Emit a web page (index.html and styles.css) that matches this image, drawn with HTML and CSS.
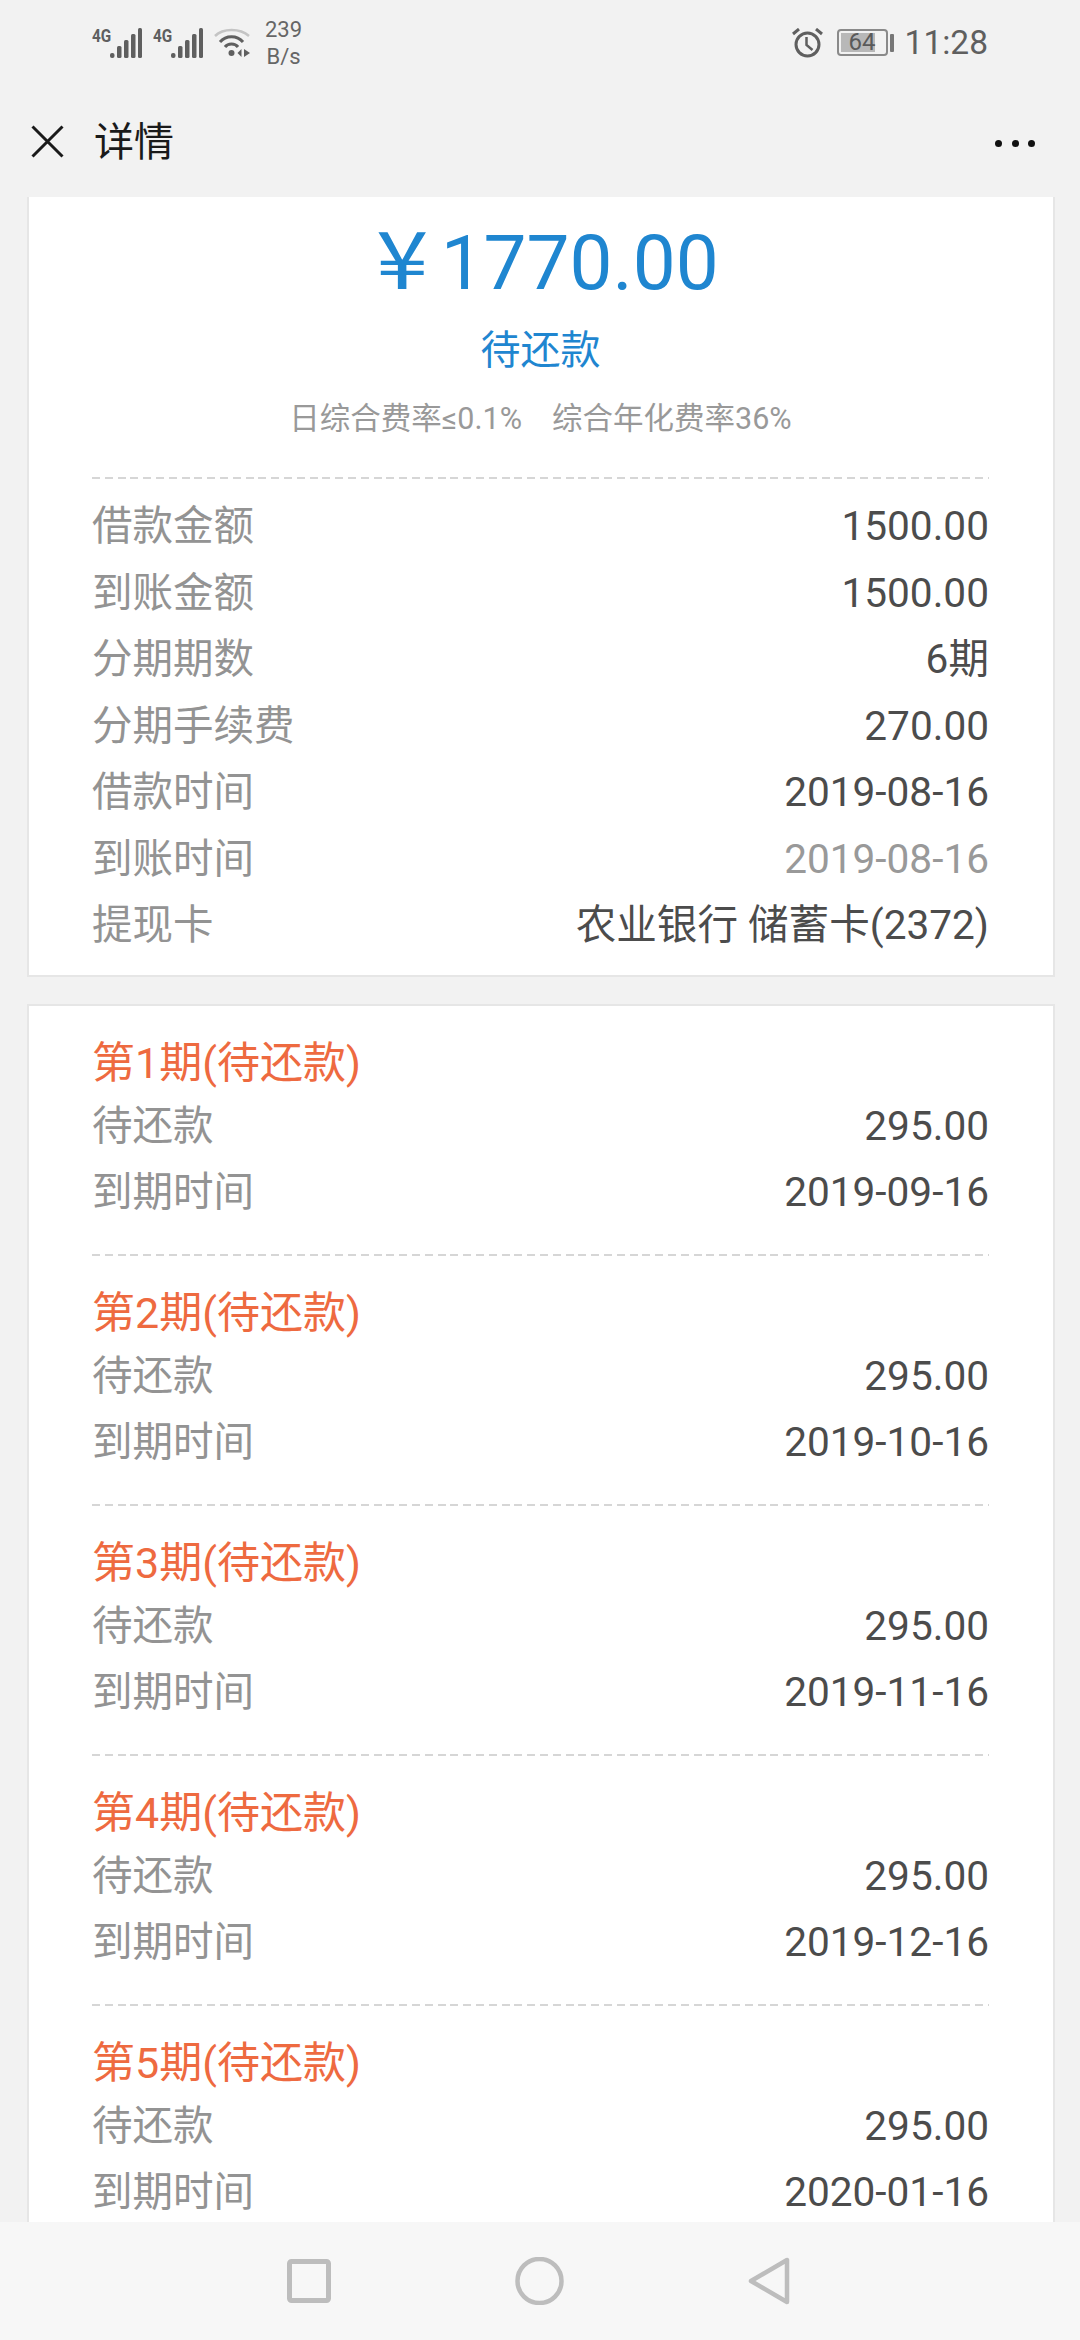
FILE: index.html
```html
<!DOCTYPE html>
<html lang="zh">
<head>
<meta charset="utf-8">
<title>详情</title>
<link rel="stylesheet" href="styles.css">
</head>
<body>
<div class="screen">
  <div class="status">
    <div class="status-left">
      <span class="net"><span class="g">4G</span><svg width="32" height="30" viewBox="0 0 32 30"><g fill="#5f5f5f"><rect x="0" y="25" width="4.500" height="5" rx="2"/><rect x="7" y="18" width="4.500" height="12" rx="1.500"/><rect x="14" y="12" width="4.500" height="18" rx="1.500"/><rect x="21" y="6" width="4.500" height="24" rx="1.500"/><rect x="28" y="0" width="4" height="30" rx="1.500"/></g></svg></span>
      <span class="net"><span class="g">4G</span><svg width="32" height="30" viewBox="0 0 32 30"><g fill="#5f5f5f"><rect x="0" y="25" width="4.500" height="5" rx="2"/><rect x="7" y="18" width="4.500" height="12" rx="1.500"/><rect x="14" y="12" width="4.500" height="18" rx="1.500"/><rect x="21" y="6" width="4.500" height="24" rx="1.500"/><rect x="28" y="0" width="4" height="30" rx="1.500"/></g></svg></span>
      <svg class="wifi" width="37" height="30" viewBox="0 0 37 30"><path d="M1 8C9 0 26 0 35 8" fill="none" stroke="#c4c4c4" stroke-width="2.500"/><path d="M6 14C12 7 23 7 29 14" fill="none" stroke="#5f5f5f" stroke-width="3"/><path d="M11 19C14 15 21 15 24 19" fill="none" stroke="#5f5f5f" stroke-width="3"/><circle cx="17.500" cy="25" r="3" fill="#5f5f5f"/><path d="M23.500 25l4-4v8zM30 21l6 4-6 4z" fill="#5f5f5f"/></svg>
      <span class="speed">239<br>B/s</span>
    </div>
    <div class="status-right">
      <svg class="alarm" width="31" height="30" viewBox="0 0 31 30"><circle cx="15.500" cy="16.500" r="11.500" fill="none" stroke="#5f5f5f" stroke-width="3"/><path d="M14.500 9v8l6 5" fill="none" stroke="#5f5f5f" stroke-width="2.500"/><path d="M1 6l6-5M30 6l-6-5" fill="none" stroke="#5f5f5f" stroke-width="3"/></svg>
      <span class="battery"><span class="battery-body"><span class="battery-fill"></span><span class="battery-num">64</span></span><span class="battery-cap"></span></span>
      <span class="clock">11:28</span>
    </div>
  </div>

  <div class="topbar">
    <svg class="close" width="33" height="33" viewBox="0 0 33 33"><path d="M1.500 1.500L31.500 31.500M31.500 1.500L1.500 31.500" stroke="#1a1a1a" stroke-width="3" fill="none"/></svg>
    <span class="title">详情</span>
    <span class="dots"><i></i><i></i><i></i></span>
  </div>

  <main class="content">
    <section class="card">
      <div class="amount"><span class="yen">¥</span><span>1770.00</span></div>
      <div class="state">待还款</div>
      <div class="rates"><span>日综合费率≤0.1%</span><span>综合年化费率36%</span></div>
      <div class="rows">
        <div class="row"><span>借款金额</span><b>1500.00</b></div>
        <div class="row"><span>到账金额</span><b>1500.00</b></div>
        <div class="row"><span>分期期数</span><b>6期</b></div>
        <div class="row"><span>分期手续费</span><b>270.00</b></div>
        <div class="row"><span>借款时间</span><b>2019-08-16</b></div>
        <div class="row"><span>到账时间</span><b class="muted">2019-08-16</b></div>
        <div class="row"><span>提现卡</span><b>农业银行 储蓄卡(2372)</b></div>
      </div>
    </section>

    <section class="card plans">
      <div class="plan">
        <div class="plan-title">第1期(待还款)</div>
        <div class="row"><span>待还款</span><b>295.00</b></div>
        <div class="row"><span>到期时间</span><b>2019-09-16</b></div>
      </div>
      <div class="plan">
        <div class="plan-title">第2期(待还款)</div>
        <div class="row"><span>待还款</span><b>295.00</b></div>
        <div class="row"><span>到期时间</span><b>2019-10-16</b></div>
      </div>
      <div class="plan">
        <div class="plan-title">第3期(待还款)</div>
        <div class="row"><span>待还款</span><b>295.00</b></div>
        <div class="row"><span>到期时间</span><b>2019-11-16</b></div>
      </div>
      <div class="plan">
        <div class="plan-title">第4期(待还款)</div>
        <div class="row"><span>待还款</span><b>295.00</b></div>
        <div class="row"><span>到期时间</span><b>2019-12-16</b></div>
      </div>
      <div class="plan">
        <div class="plan-title">第5期(待还款)</div>
        <div class="row"><span>待还款</span><b>295.00</b></div>
        <div class="row"><span>到期时间</span><b>2020-01-16</b></div>
      </div>
    </section>
  </main>

  <nav class="navbar">
    <svg width="44" height="44" viewBox="0 0 44 44"><rect x="2.500" y="2.500" width="39" height="39" rx="2" fill="none" stroke="#bdbdbd" stroke-width="5"/></svg>
    <svg width="49" height="48" viewBox="0 0 49 48"><circle cx="24.500" cy="24" r="22" fill="none" stroke="#bdbdbd" stroke-width="4.500"/></svg>
    <svg width="42" height="48" viewBox="0 0 42 48"><path d="M39 3V45L3 24Z" fill="none" stroke="#bdbdbd" stroke-width="4.500" stroke-linejoin="round"/></svg>
  </nav>
</div>
</body>
</html>
```
FILE: styles.css
```css
* { box-sizing: border-box; }
html, body { margin: 0; padding: 0; }
body { font-family: Roboto, "Noto Sans CJK SC", sans-serif; background: #f2f2f2; }
.screen { width: 1080px; height: 2340px; display: flex; flex-direction: column; overflow: hidden; background: #f2f2f2; }

.status { height: 85px; flex: none; display: flex; justify-content: space-between; align-items: center; padding: 0 92px; color: #5f5f5f; }
.status-left, .status-right { display: flex; align-items: center; }
.net { display: flex; align-items: flex-start; margin-right: 11px; width: 50px; height: 30px; }
.net .g { display: block; width: 18px; flex: none; font-size: 18px; font-weight: 700; line-height: 16px; white-space: nowrap; transform: scaleX(.85); transform-origin: left top; }
.wifi { margin-right: 14px; }
.speed { font-size: 22px; line-height: 27px; text-align: center; color: #666; }
.alarm { margin-right: 14px; }
.battery { display: flex; align-items: center; margin-right: 11px; }
.battery-body { position: relative; width: 51px; height: 27px; border: 2px solid #8a8a8a; border-radius: 4px; padding: 2px; display: block; }
.battery-fill { display: block; height: 100%; width: 80%; background: #b8b8b8; }
.battery-num { position: absolute; inset: 0; text-align: center; font-size: 24px; line-height: 23px; color: #5a5a5a; }
.battery-cap { width: 4px; height: 18px; background: #777; margin-left: 2px; border-radius: 1px; }
.clock { font-size: 33.500px; color: #5f5f5f; line-height: 40px; }

.topbar { height: 112px; flex: none; display: flex; align-items: center; padding: 0 45px 0 31px; }
.title { font-size: 40px; color: #1a1a1a; margin-left: 30px; flex: 1; line-height: 50px; margin-top: 4px; }
.dots { display: flex; gap: 9.500px; margin-top: 4px; }
.dots i { width: 7px; height: 7px; border-radius: 50%; background: #111; display: block; }

.content { flex: 1; min-height: 0; overflow: hidden; padding: 0 25px 0 27px; display: flex; flex-direction: column; gap: 27px; }
.card { background: #fff; border: 2px solid #e6e6e6; border-top: 0; padding: 0 64px 0 63px; flex: none; }
.amount { display: flex; justify-content: center; align-items: baseline; height: 90px; font-size: 76.500px; line-height: 90px; color: #1f86d0; margin-top: 21px; padding-left: 18px; }
.yen { font-family: "Noto Sans CJK SC", sans-serif; font-size: 80px; line-height: 70px; margin-right: 16px; transform: scaleX(1.18); }
.state { text-align: center; font-size: 40px; line-height: 56px; color: #1f86d0; margin-top: 15px; }
.rates { display: flex; justify-content: center; gap: 30px; font-size: 30.500px; line-height: 40px; color: #999; margin-top: 20px; }
.rows { background: repeating-linear-gradient(90deg, #d6d6d6 0 8px, transparent 8px 12.800px) top left / 100% 2px no-repeat; margin-top: 38px; padding: 16px 0 16px; }
.row { display: flex; justify-content: space-between; align-items: baseline; height: 66.500px; line-height: 66.500px; font-size: 40.500px; color: #939393; }
.row b { font-weight: 400; font-size: 40.600px; color: #4c4c4c; }
.row b.muted { color: #999; }

.plans { border-top: 2px solid #e6e6e6; padding-top: 27px; }
.plan { padding-bottom: 30px; background: repeating-linear-gradient(90deg, #d6d6d6 0 8px, transparent 8px 12.800px) bottom left / 100% 2px no-repeat; }
.plan + .plan { padding-top: 27px; }
.plan-title { font-size: 43px; line-height: 60px; color: #ee6a40; }

.navbar { height: 118px; flex: none; background: #f7f7f7; display: flex; justify-content: flex-start; align-items: center; gap: 184px; padding-left: 287px; }
```
